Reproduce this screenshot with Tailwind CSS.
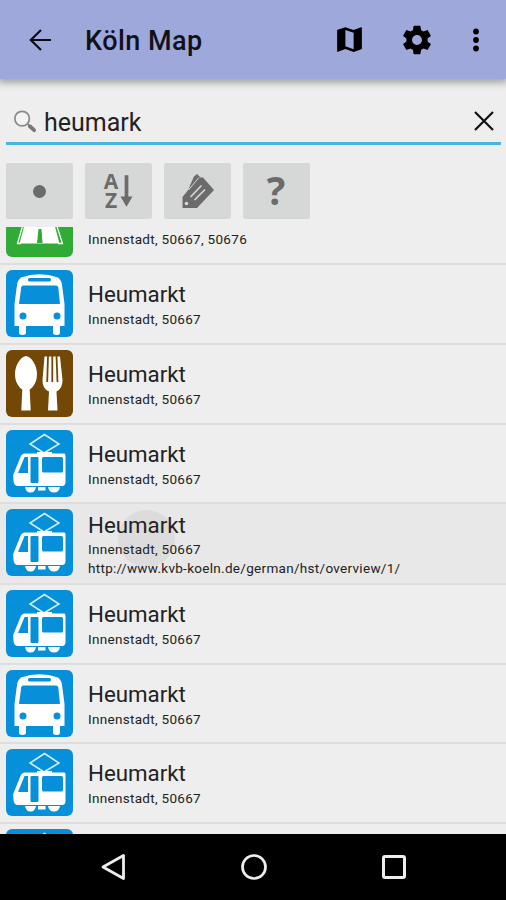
<!DOCTYPE html>
<html lang="de">
<head>
<meta charset="utf-8">
<title>Köln Map</title>
<script src="https://cdn.jsdelivr.net/npm/@tailwindcss/browser@4"></script>
</head>
<body class="bg-[#eeeeee]">
<svg class="hidden">
  <symbol id="bus" viewBox="0 0 67 67">
    <rect width="67" height="67" rx="6" fill="#0790da"/>
    <path fill="#fff" d="M15 7.500Q33.500 1 52 7.500Q55.500 10 56 15L58.500 34V56H54V62.500Q54 65 50.500 65Q47 65 47 62.500V56H20V62.500Q20 65 16.500 65Q13 65 13 62.500V56H8.500V34L11 15Q11.500 10 15 7.500Z"/>
    <rect x="22" y="8" width="23" height="3.500" rx="1.500" fill="#0790da"/>
    <path fill="#0790da" d="M17.500 15.500H50Q52 15.500 52.300 17.500L54 34H13L15.200 17.500Q15.500 15.500 17.500 15.500Z"/>
    <circle cx="17" cy="46" r="3.500" fill="#0790da"/><circle cx="51" cy="46" r="3.500" fill="#0790da"/>
  </symbol>
  <symbol id="food" viewBox="0 0 67 67">
    <rect width="67" height="67" rx="6" fill="#734807"/>
    <path fill="#fff" d="M20 6C26 7 31 16 31 24C31 32 27.500 37 23.700 39.500L24.700 60.500H15.300L16.300 39.500C12.500 37 9 32 9 24C9 16 14 7 20 6Z"/>
    <path fill="#fff" d="M38.500 6.500H54L56.500 30C56.500 36 54 40 50.500 41.500L51.500 60.500H42L43 41.500C39 40 36.500 36 36.500 30Z"/>
    <path stroke="#734807" stroke-width="1.800" d="M42 6L41.200 32M46.300 6V32M50.500 6L51.500 32"/>
  </symbol>
  <symbol id="tram" viewBox="0 0 67 67">
    <rect width="67" height="67" rx="6" fill="#0790da"/>
    <path fill="none" stroke="#d4eefb" stroke-width="1.500" d="M38 23L24 14L38.500 4.500L53 14L38 23"/>
    <path fill="#fff" d="M31 22H46V23.500H58.500Q59.500 23.500 59.500 26V52Q59.500 56 56 56H12Q8 56 7.500 51L7.200 45L14.500 27Q15.700 23.500 19 23.500H31Z"/>
    <path fill="#0790da" d="M18.500 27H22V43H12Z"/>
    <rect x="24.500" y="27" width="8" height="26" rx="1" fill="#0790da"/>
    <rect x="36" y="27" width="21" height="15.500" rx="1.500" fill="#0790da"/>
    <path fill="#fff" d="M19 57H30Q29 62.500 24.500 62.500Q20 62.500 19 57ZM32 57H39.500V60.500H32ZM42 57H54Q53 62.500 48 62.500Q43 62.500 42 57Z"/>
  </symbol>
</svg>
<div class="w-[506px] h-[900px] flex flex-col overflow-hidden bg-[#eeeeee] font-['Roboto',sans-serif] text-[#222]">
  <header class="h-[79px] shrink-0 relative flex items-center bg-[#9fa8da] shadow-[0_2px_7px_2px_rgba(60,75,60,0.42)] text-black">
    <svg class="ml-[29px] w-[23px] h-[24px]" viewBox="0 0 23 24" fill="none" stroke="#0c0e16" stroke-width="2.200"><path d="M12 2L1.800 12L12 22M1.800 12H22"/></svg>
    <h1 class="ml-[33px] pt-[3px] text-[27px] leading-[32px] font-medium tracking-[0.450px] text-[#10121a]">Köln Map</h1>
    <div class="ml-auto flex items-center pr-[25px]">
      <svg class="w-[33px] h-[33px] mr-[34px]" viewBox="0 0 24 24"><path d="M20.500 3l-.16.030L15 5.100 9 3 3.360 4.900c-.21.070-.36.250-.36.480V20.500c0 .28.220.5.500.5l.16-.030L9 18.900l6 2.100 5.640-1.900c.21-.070.360-.250.360-.480V3.500c0-.280-.220-.500-.500-.500zM15 19l-6-2.110V5l6 2.110V19z"/></svg>
      <svg class="w-[34px] h-[34px] mr-[37px]" viewBox="0 0 24 24"><path d="M19.430 12.980c.040-.320.070-.640.070-.980s-.030-.660-.070-.980l2.110-1.650c.190-.150.240-.420.120-.640l-2-3.460c-.120-.220-.390-.300-.610-.220l-2.490 1c-.520-.400-1.080-.730-1.690-.980l-.380-2.650C14.460 2.180 14.250 2 14 2h-4c-.250 0-.460.180-.490.420l-.380 2.650c-.610.250-1.170.590-1.690.980l-2.490-1c-.230-.090-.490 0-.610.220l-2 3.460c-.130.220-.070.490.120.640l2.110 1.650c-.040.320-.070.650-.070.980s.030.660.070.980l-2.110 1.650c-.190.150-.240.420-.120.640l2 3.460c.120.220.390.300.610.220l2.490-1c.520.400 1.080.730 1.690.980l.380 2.650c.030.240.240.420.490.420h4c.250 0 .460-.180.490-.420l.380-2.650c.610-.250 1.170-.590 1.690-.980l2.490 1c.230.090.490 0 .610-.220l2-3.460c.120-.220.070-.490-.120-.640l-2.110-1.650zM12 15.500c-1.930 0-3.500-1.570-3.500-3.500s1.570-3.500 3.500-3.500 3.500 1.570 3.500 3.500-1.570 3.500-3.500 3.500z"/></svg>
      <svg class="w-[10px] h-[26px]" viewBox="0 0 10 26"><circle cx="5" cy="4.500" r="2.900"/><circle cx="5" cy="13" r="2.900"/><circle cx="5" cy="21.500" r="2.900"/></svg>
    </div>
  </header>
  <div class="ml-[6px] mr-[5px] mt-[21px] h-[45px] shrink-0 flex items-center border-b-[3px] border-[#4bb4dc]">
    <svg class="ml-[7px] w-[24px] h-[25px]" viewBox="0 0 25 25" fill="none"><circle cx="9.500" cy="9.500" r="7.600" fill="#f3f3f3" stroke="#8a8a8a" stroke-width="1.800"/><path d="M14.800 14.800L17.500 17.500" stroke="#888" stroke-width="1.700"/><path d="M17.500 17.500L22 21.500" stroke="#777" stroke-width="4" stroke-linecap="round"/></svg>
    <span class="ml-[7px] pt-[4px] text-[25px] leading-[30px]">heumark</span>
    <svg class="ml-auto mr-[6px] w-[22px] h-[22px]" viewBox="0 0 22 22" stroke="#111" stroke-width="2.200"><path d="M2 2L20 20M20 2L2 20"/></svg>
  </div>
  <div class="mt-[18px] ml-[6px] h-[55px] shrink-0 flex gap-[12px]">
    <div class="w-[67px] h-[56px] rounded-[2px] bg-[#d6d8d7] flex items-center justify-center"><div class="size-[13px] rounded-full bg-[#6b6b6b]"></div></div>
    <div class="w-[67px] h-[56px] rounded-[2px] bg-[#d6d8d7] flex items-center justify-center gap-[2px]">
      <div class="flex flex-col items-center text-[21px] leading-[19px] font-bold text-[#6b6b6b] font-['Open_Sans',sans-serif]"><span>A</span><span>Z</span></div>
      <svg class="w-[13px] h-[34px]" viewBox="0 0 14 36" fill="#6b6b6b"><path d="M5 1H9V24H13.500L7 35L.5 24H5Z"/></svg>
    </div>
    <div class="w-[67px] h-[56px] rounded-[2px] bg-[#d6d8d7] flex items-center justify-center">
      <svg class="w-[34px] h-[36px]" viewBox="0 0 34 36"><path d="M1.500 24L14.500 8L18 4.500L22 4.500L33 17L16 35H1.500Z" fill="#6b6b6b"/><path d="M7.500 16L13 3.500L16 1L19.500 4.500Z" fill="#6b6b6b"/><path d="M7.500 17L18 4.500" stroke="#d6d8d7" stroke-width="1"/><circle cx="5.500" cy="30.500" r="1.800" fill="#d6d8d7"/><path d="M10 23.500L20 13M14 26.500L23.500 17" stroke="#d6d8d7" stroke-width="1.700" stroke-linecap="round"/></svg>
    </div>
    <div class="w-[67px] h-[56px] rounded-[2px] bg-[#d6d8d7] flex items-center justify-center pr-px text-[39px] leading-[54px] font-bold text-[#6b6b6b] font-['Open_Sans',sans-serif]"><span class="-mt-[2px]">?</span></div>
  </div>
  <main class="mt-[9px] h-[607px] shrink-0 overflow-hidden">
    <div class="-mt-[45px] h-[81px] flex">
      <svg class="ml-[6px] mt-[8px] size-[67px] shrink-0" viewBox="0 0 67 67"><rect width="67" height="67" rx="6" fill="#30ab35"/><path fill="#fff" d="M24 14H43L53.500 53.500H13.500Z"/><path fill="none" stroke="#fff" stroke-width="1.300" d="M20 24L11.500 53.500H15M47 24L56.500 53.500H52"/><path fill="#30ab35" d="M32.500 39H35.500L36.500 53H31Z"/></svg>
      <div class="ml-[15px] pt-[48px] text-[13.500px] leading-[19px] tracking-[0.3px]">Innenstadt, 50667, 50676</div>
    </div>
    <div class="h-[80px] flex border-t-2 border-[#dedede]">
      <svg class="ml-[6px] mt-[5px] size-[67px] shrink-0"><use href="#bus"/></svg>
      <div class="ml-[15px] pt-[15px]"><div class="text-[22.300px] leading-[28px]">Heumarkt</div><div class="mt-[2px] text-[13.500px] leading-[19px] tracking-[0.3px]">Innenstadt, 50667</div></div>
    </div>
    <div class="h-[80px] flex border-t-2 border-[#dedede]">
      <svg class="ml-[6px] mt-[5px] size-[67px] shrink-0"><use href="#food"/></svg>
      <div class="ml-[15px] pt-[15px]"><div class="text-[22.300px] leading-[28px]">Heumarkt</div><div class="mt-[2px] text-[13.500px] leading-[19px] tracking-[0.3px]">Innenstadt, 50667</div></div>
    </div>
    <div class="h-[79px] flex border-t-2 border-[#dedede]">
      <svg class="ml-[6px] mt-[5px] size-[67px] shrink-0"><use href="#tram"/></svg>
      <div class="ml-[15px] pt-[15px]"><div class="text-[22.300px] leading-[28px]">Heumarkt</div><div class="mt-[2px] text-[13.500px] leading-[19px] tracking-[0.3px]">Innenstadt, 50667</div></div>
    </div>
    <div class="relative h-[81px] flex border-t-2 border-[#dedede] bg-[#e8e8e8]">
      <div class="absolute left-[118px] top-[6px] size-[57px] rounded-full bg-[#dcdcdc]"></div>
      <svg class="ml-[6px] mt-[5px] size-[67px] shrink-0"><use href="#tram"/></svg>
      <div class="relative ml-[15px] pt-[7px]"><div class="text-[22.300px] leading-[28px]">Heumarkt</div><div class="mt-px text-[13.500px] leading-[19px] tracking-[0.3px]">Innenstadt, 50667</div><div class="text-[13.500px] leading-[19px] tracking-[0.3px]">http://www.kvb-koeln.de/german/hst/overview/1/</div></div>
    </div>
    <div class="h-[80px] flex border-t-2 border-[#dedede]">
      <svg class="ml-[6px] mt-[5px] size-[67px] shrink-0"><use href="#tram"/></svg>
      <div class="ml-[15px] pt-[15px]"><div class="text-[22.300px] leading-[28px]">Heumarkt</div><div class="mt-[2px] text-[13.500px] leading-[19px] tracking-[0.3px]">Innenstadt, 50667</div></div>
    </div>
    <div class="h-[79px] flex border-t-2 border-[#dedede]">
      <svg class="ml-[6px] mt-[5px] size-[67px] shrink-0"><use href="#bus"/></svg>
      <div class="ml-[15px] pt-[15px]"><div class="text-[22.300px] leading-[28px]">Heumarkt</div><div class="mt-[2px] text-[13.500px] leading-[19px] tracking-[0.3px]">Innenstadt, 50667</div></div>
    </div>
    <div class="h-[80px] flex border-t-2 border-[#dedede]">
      <svg class="ml-[6px] mt-[5px] size-[67px] shrink-0"><use href="#tram"/></svg>
      <div class="ml-[15px] pt-[15px]"><div class="text-[22.300px] leading-[28px]">Heumarkt</div><div class="mt-[2px] text-[13.500px] leading-[19px] tracking-[0.3px]">Innenstadt, 50667</div></div>
    </div>
    <div class="h-[80px] flex border-t-2 border-[#dedede]">
      <svg class="ml-[6px] mt-[5px] size-[67px] shrink-0"><use href="#tram"/></svg>
    </div>
  </main>
  <nav class="flex-1 bg-black flex items-center">
    <svg class="ml-[101px] w-[26px] h-[28px]" viewBox="0 0 26 28" fill="none" stroke="#eee" stroke-width="2.800" stroke-linejoin="round"><path d="M2 14L22.500 2.500V25.500Z"/></svg>
    <svg class="ml-[113px] w-[28px] h-[28px]" viewBox="0 0 28 28" fill="none" stroke="#eee" stroke-width="2.700"><circle cx="14" cy="14" r="11.500"/></svg>
    <div class="ml-[114px] size-[24px] border-[3px] border-[#eee] rounded-[3px]"></div>
  </nav>
</div>
</body>
</html>
